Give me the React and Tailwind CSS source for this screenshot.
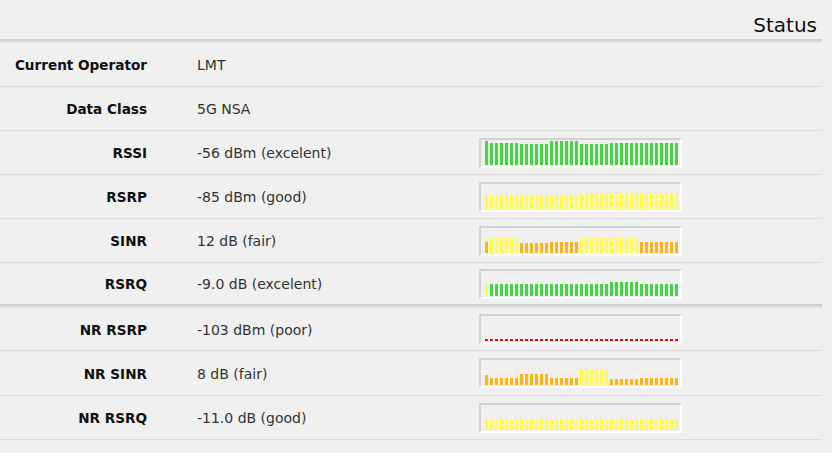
import React from "react";

const G = "bg-[#44d444]";
const Y = "bg-[#ffff40]";
const O = "bg-[#ffb414]";
const R = "bg-[#ff0000]";

function seq(parts) {
  const out = [];
  parts.forEach(([n, h, c]) => {
    for (let i = 0; i < n; i++) out.push([h, c]);
  });
  return out;
}

const rows1 = [
  { label: "Current Operator", value: "LMT", h: "h-[44px]" },
  { label: "Data Class", value: "5G NSA", h: "h-[44px]" },
  {
    label: "RSSI",
    value: "-56 dBm (excelent)",
    h: "h-[44px]",
    bars: seq([[1, 24, G], [6, 22, G], [6, 21, G], [6, 24, G], [6, 21, G], [14, 22, G]]),
  },
  {
    label: "RSRP",
    value: "-85 dBm (good)",
    h: "h-[44px]",
    bars: seq([[13, 13, Y], [6, 14, Y], [20, 16, Y]]),
  },
  {
    label: "SINR",
    value: "12 dB (fair)",
    h: "h-[44px]",
    bars: seq([[1, 11, O], [6, 15, Y], [6, 10, O], [6, 11, O], [6, 15, Y], [6, 16, Y], [8, 11, O]]),
  },
  {
    label: "RSRQ",
    value: "-9.0 dB (excelent)",
    h: "h-[41px]",
    bars: seq([[1, 11, Y], [24, 12, G], [6, 14, G], [8, 12, G]]),
  },
];

const rows2 = [
  { label: "NR RSRP", value: "-103 dBm (poor)", h: "h-[43px]", bars: seq([[39, 2, R]]) },
  {
    label: "NR SINR",
    value: "8 dB (fair)",
    h: "h-[45px]",
    bars: seq([[1, 10, O], [6, 7, O], [6, 11, O], [6, 7, O], [6, 16, Y], [6, 6, O], [8, 7, O]]),
  },
  {
    label: "NR RSRQ",
    value: "-11.0 dB (good)",
    h: "h-[44px]",
    bars: seq([[31, 10, Y], [8, 11, Y]]),
  },
];

function Chart({ bars }) {
  return (
    <div className="ml-[148px] w-[203px] h-[30px] border-t-2 border-l-2 border-r-2 border-b-2 border-t-[#d2d2d2] border-l-[#d2d2d2] border-r-white border-b-white flex items-end gap-[2px] pl-[4px] pb-[1px]">
      {bars.map(([h, c], i) => (
        <div key={i} className={`w-[3px] shrink-0 ${c}`} style={{ height: h + "px" }} />
      ))}
    </div>
  );
}

function Row({ row, border }) {
  return (
    <div className={`flex items-center ${row.h} ${border ? "border-b border-[#dcdcdc]" : ""}`}>
      <div className="w-[147px] pt-[2px] text-right font-bold text-[13.6px] text-[#111] whitespace-nowrap">
        {row.label}
      </div>
      <div className="ml-[50px] w-[134px] pt-[2px] whitespace-nowrap text-[14px] text-[#333]">
        {row.value}
      </div>
      {row.bars && <Chart bars={row.bars} />}
    </div>
  );
}

function DoubleLine() {
  return <div className="h-[4px] border-t-2 border-t-[#cdcdcd] border-b-2 border-b-[#e2e2e2]" />;
}

export default function App() {
  return (
    <div
      className="w-[832px] h-[453px] bg-[#f0f0f0] overflow-hidden"
      style={{ fontFamily: '"DejaVu Sans", Verdana, sans-serif' }}
    >
      <div className="w-[822px]">
        <div className="h-[39px] flex items-end justify-end pr-[5px] pb-[2px]">
          <span className="text-[20px] leading-[24px] text-[#111]">Status</span>
        </div>
        <DoubleLine />
        {rows1.map((r, i) => (
          <Row key={r.label} row={r} border={i < rows1.length - 1} />
        ))}
        <DoubleLine />
        {rows2.map((r) => (
          <Row key={r.label} row={r} border />
        ))}
      </div>
    </div>
  );
}
